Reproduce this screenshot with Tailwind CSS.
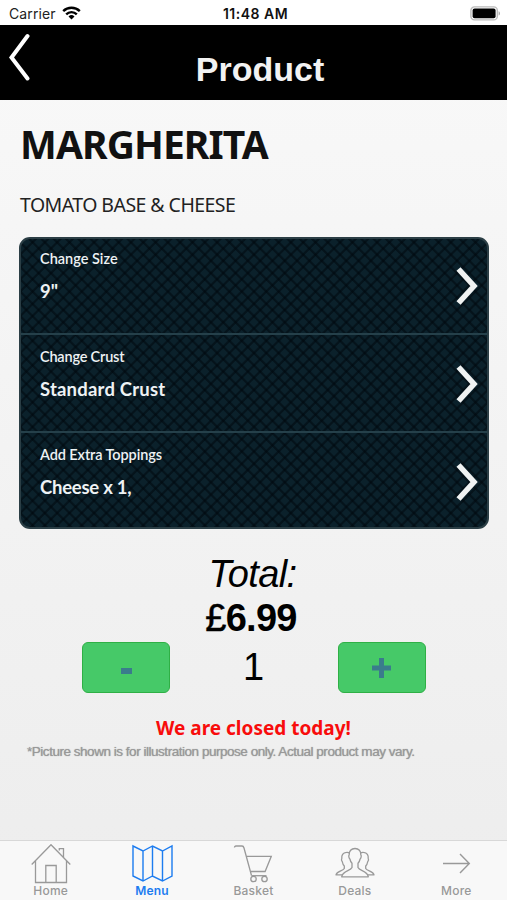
<!DOCTYPE html>
<html lang="en">
<head>
    <meta charset="UTF-8">
    <meta name="viewport" content="width=device-width, initial-scale=1.0">
    <title>Product</title>
    <script src="https://cdn.jsdelivr.net/npm/@tailwindcss/browser@4"></script>
    <style>
        body {
            font-family: 'Noto Sans', sans-serif;
        }
        /* Diamond mesh behind the option rows */
        .mesh {
            background-color: #0b212b;
            background-image:
                repeating-linear-gradient(45deg, rgba(0, 8, 14, 0.55) 0 1.2px, transparent 2.4px 7.8px, rgba(0, 8, 14, 0.55) 8.7px),
                repeating-linear-gradient(-45deg, rgba(0, 8, 14, 0.55) 0 1.2px, transparent 2.4px 7.8px, rgba(0, 8, 14, 0.55) 8.7px);
        }
    </style>
</head>
<body class="h-[900px] w-[507px] overflow-hidden flex flex-col bg-linear-to-b from-[#f9f9f9] to-[#ededed]">

    <!-- Status bar -->
    <div class="h-[25px] shrink-0 bg-white grid grid-cols-3 items-center pl-[9px] pr-[6px] pt-[2px] font-['Inter'] text-[14px] leading-none text-[#222]">
        <div class="flex items-center gap-[6px]">
            <span class="tracking-[0.1px]">Carrier</span>
            <svg class="w-[19px] h-[14px] -mt-[2px]" viewBox="0 0 19 14" fill="none" stroke="#000" stroke-width="2.4">
                <path d="M1.2 5.2a11.8 11.8 0 0 1 16.6 0"/>
                <path d="M4.2 8.3a7.5 7.5 0 0 1 10.6 0"/>
                <path d="M9.5 13.6l-3-3.1a4.3 4.3 0 0 1 6 0z" fill="#000" stroke="none"/>
            </svg>
        </div>
        <span class="text-center font-semibold text-[14px] tracking-[0.500px] pl-[1px] -mr-[2px] -ml-[2px] text-[#111] whitespace-nowrap">11:48 AM</span>
        <svg class="w-[31px] h-[15px] justify-self-end -mt-[1px]" viewBox="0 0 31 15">
            <rect x="0.9" y="0.9" width="26.4" height="13" rx="3.5" fill="#fff" stroke="#bbb" stroke-width="1.4"/>
            <rect x="2.6" y="2.6" width="23" height="9.6" rx="2" fill="#000"/>
            <path d="M28.6 5.2v4.4c1.9-.7 1.9-3.700 0-4.400z" fill="#aaa"/>
        </svg>
    </div>

    <!-- Header -->
    <header class="relative h-[75px] shrink-0 bg-black flex justify-center">
        <svg class="absolute left-[8px] top-[8px] w-[24px] h-[48px]" viewBox="0 0 24 48" fill="none" stroke="#fff" stroke-width="4" stroke-linecap="round">
            <path d="M19.500 3L3.500 24.500 19.500 45.500"/>
        </svg>
        <h1 class="ml-[13px] mt-[24px] text-[34px] leading-[40px] font-bold text-[#f2f2f2] font-['Liberation_Sans']">Product</h1>
    </header>

    <main class="flex-1 px-[19px]">
        <h2 class="mt-[20px] h-[48px] text-[39px] leading-[48px] font-bold text-[#111] pl-[1px] tracking-[-0.9px] whitespace-nowrap">MARGHERITA</h2>
        <p class="mt-[24px] h-[26px] text-[19.500px] leading-[26px] text-[#222] pl-[1px] tracking-[-0.550px] whitespace-nowrap">TOMATO BASE &amp; CHEESE</p>

        <!-- Options -->
        <div class="mesh mt-[19px] w-[470px] h-[292px] rounded-[11px] border-2 border-[#2b3e45] divide-y-2 divide-[#25404a] grid grid-rows-[96px_98px_94px] font-['Lato'] font-semibold text-[#eef2f4] overflow-hidden">
            <div class="flex justify-between pl-[19px] pr-[9px]">
                <div class="pt-[10px]">
                    <p class="text-[14.500px] leading-[20px]">Change Size</p>
                    <p class="mt-[9px] text-[18.500px] leading-[26px] font-bold">9"</p>
                </div>
                <svg class="mt-[27px] w-[22px] h-[40px]" viewBox="0 0 22 40" fill="none" stroke="#f0f2f2" stroke-width="5.500"><path d="M2.500 3L18 20 2.500 37"/></svg>
            </div>
            <div class="flex justify-between pl-[19px] pr-[9px]">
                <div class="pt-[12px]">
                    <p class="text-[14.500px] leading-[20px] tracking-[-0.200px]">Change Crust</p>
                    <p class="mt-[9px] text-[18.500px] leading-[26px] font-bold tracking-[0.200px]">Standard Crust</p>
                </div>
                <svg class="mt-[29px] w-[22px] h-[40px]" viewBox="0 0 22 40" fill="none" stroke="#f0f2f2" stroke-width="5.500"><path d="M2.500 3L18 20 2.500 37"/></svg>
            </div>
            <div class="flex justify-between pl-[19px] pr-[9px]">
                <div class="pt-[12px]">
                    <p class="text-[14.500px] leading-[20px] tracking-[-0.100px]">Add Extra Toppings</p>
                    <p class="mt-[9px] text-[18.500px] leading-[26px] font-bold tracking-[-0.250px]">Cheese x 1,</p>
                </div>
                <svg class="mt-[29px] w-[22px] h-[40px]" viewBox="0 0 22 40" fill="none" stroke="#f0f2f2" stroke-width="5.500"><path d="M2.500 3L18 20 2.500 37"/></svg>
            </div>
        </div>

        <!-- Total and quantity -->
        <div class="mt-[23px] text-center font-['Liberation_Sans'] text-[38px] leading-[44px] text-black">
            <p class="italic tracking-[-0.600px] pr-[2px]">Total:</p>
            <p class="pr-[5px] tracking-[-0.700px]"><span class="[-webkit-text-stroke:0.5px_#000]">£</span><b>6.99</b></p>
        </div>
        <div class="mt-[2px] mx-[63px] w-[344px] flex justify-between font-['Liberation_Sans']">
            <button class="w-[88px] h-[51px] rounded-[6px] border border-[#2fb045] bg-[#46c968] flex justify-center items-center">
                <span class="block w-[11px] h-[6px] mt-[7px] bg-[#3a7c8c]"></span>
            </button>
            <span class="text-[38px] leading-[51px] text-black -ml-[1px]">1</span>
            <button class="w-[88px] h-[51px] rounded-[6px] border border-[#2fb045] bg-[#46c968] flex justify-center items-center">
                <svg class="w-[19px] h-[20px]" viewBox="0 0 19 20" stroke="#3a7c8c" stroke-width="5"><path d="M9.500 0v20M0 10h19"/></svg>
            </button>
        </div>
        <p class="mt-[22px] text-center text-[19px] leading-[27px] font-bold text-[#f80c0c]">We are closed today!</p>
        <p class="pl-[8px] mt-[1px] text-[13.500px] leading-[18px] text-[#999] font-['Liberation_Sans'] tracking-[-0.470px] whitespace-nowrap [text-shadow:0_0_1px_#999]">*Picture shown is for illustration purpose only. Actual product may vary.</p>
    </main>

    <!-- Tab bar -->
    <nav class="h-[60px] shrink-0 border-t border-[#d8d8d8] bg-[#f8f8f8] grid grid-cols-5 text-[12px] leading-[14px] font-medium font-['Inter'] text-[#999] text-center tracking-[0.2px]">
        <a class="flex flex-col items-center">
            <svg class="mt-[2px] w-[40px] h-[41px]" viewBox="0 0 40 41" fill="none" stroke="#999" stroke-width="1.300">
                <path d="M.7 21.500L20 1.700l19.300 19.800M4.500 17.600V39.500h31V17.600M14.800 39.500V22.500h10.400v17M28.300 7.500V5.700h4.200v8.600"/>
            </svg>
            <span>Home</span>
        </a>
        <a class="flex flex-col items-center text-[#1c7cf0]">
            <svg class="mt-[2px] w-[42px] h-[41px]" viewBox="0 0 42 41" fill="none" stroke="#1c7cf0" stroke-width="1.400">
                <path d="M2 3L12 8l9.500-5L31.500 8 41 3v30L31.500 38l-10-5L12 38 2 33zM12 8v30M21.500 3v30M31.500 8v30"/>
            </svg>
            <span class="font-semibold">Menu</span>
        </a>
        <a class="flex flex-col items-center">
            <svg class="mt-[2px] w-[40px] h-[41px]" viewBox="0 0 40 41" fill="none" stroke="#999" stroke-width="1.300">
                <path d="M1.500 4.500Q1.500 3 3 3h6q1.500 0 2 2l7.500 27.500M13 13.300h25.300l-6.200 15.200H17.200"/>
                <circle cx="20.500" cy="36" r="2.700"/><circle cx="31.500" cy="36" r="2.700"/>
                <path d="M18.500 32.700h15"/>
            </svg>
            <span>Basket</span>
        </a>
        <a class="flex flex-col items-center">
            <svg class="mt-[2px] w-[40px] h-[41px]" viewBox="0 0 40 41" fill="none" stroke="#999" stroke-width="1.300" stroke-linejoin="round">
                <path d="M20 5.500c-3.800 0-6 2.500-5.800 6.300-.9 1-.3 3.400.7 4.200.4 2 1.200 3.300 2.100 4.300v4.200c-1.500 3.500-9.500 3.200-10.300 9.300h26.600c-.8-6.100-8.800-5.800-10.300-9.300v-4.200c.9-1 1.700-2.300 2.100-4.300 1-.8 1.600-3.200.7-4.200.2-3.800-2-6.300-5.800-6.300z"/>
                <path d="M14.500 10c-1-.6-1.900-.8-3-.6-3.800.2-5 3.100-4.700 6-.8 1.300-.2 2.700.6 3.600.3 2 1 3.200 1.900 4v2.500c-1.300 2.500-7.600 2.500-8.300 6.300h6.500"/>
                <path d="M25.500 10c1-.6 1.900-.8 3-.6 3.800.2 5 3.100 4.700 6 .8 1.300.2 2.700-.6 3.600-.3 2-1 3.200-1.900 4v2.500c1.300 2.500 7.600 2.500 8.300 6.300h-6.500"/>
            </svg>
            <span>Deals</span>
        </a>
        <a class="flex flex-col items-center">
            <svg class="mt-[2px] w-[40px] h-[41px]" viewBox="0 0 40 41" fill="none" stroke="#999" stroke-width="1.400">
                <path d="M7 20.500h26M24 11l9.300 9.500L24 30"/>
            </svg>
            <span>More</span>
        </a>
    </nav>
</body>
</html>
